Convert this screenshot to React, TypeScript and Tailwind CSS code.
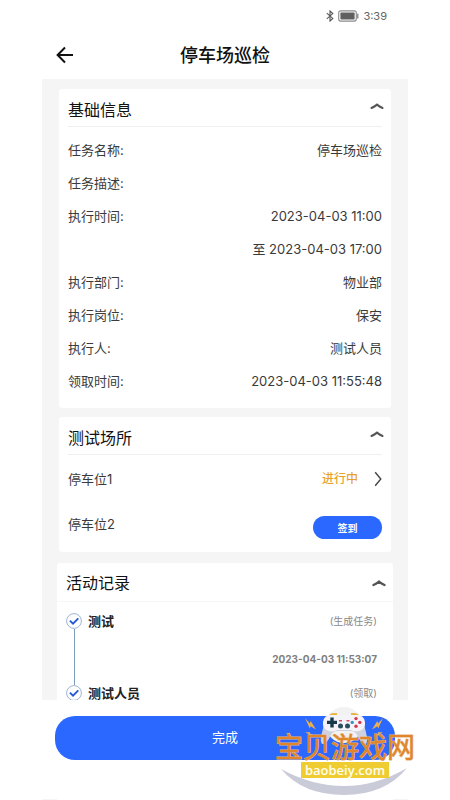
import { useState, type ReactNode } from "react";
import { clsx } from "clsx";

const INFO_ROWS = [
  { label: "任务名称:", value: "停车场巡检" },
  { label: "任务描述:", value: "" },
  { label: "执行时间:", value: "2023-04-03 11:00" },
  { label: "", value: "至 2023-04-03 17:00" },
  { label: "执行部门:", value: "物业部" },
  { label: "执行岗位:", value: "保安" },
  { label: "执行人:", value: "测试人员" },
  { label: "领取时间:", value: "2023-04-03 11:55:48" },
];

const RECORDS = [
  { name: "测试", action: "(生成任务)", time: "2023-04-03 11:53:07" },
  { name: "测试人员", action: "(领取)", time: "2023-04-03 11:55:48" },
];

function StatusBar() {
  return (
    <div className="flex h-8 shrink-0 items-center justify-end gap-1 pr-[21px] text-[11px] text-[#666]">
      <svg width="8" height="12" viewBox="0 0 8 12" fill="none" stroke="#555" strokeWidth="1.1" aria-hidden="true">
        <path d="M0.8 3.2 6.8 8.4 4 11V1l2.8 2.6L0.8 8.8" />
      </svg>
      <svg width="21" height="12" viewBox="0 0 21 12" aria-hidden="true">
        <rect x="0.7" y="0.9" width="17.6" height="10.2" rx="2" fill="#fff" stroke="#8a8a8a" strokeWidth="1.1" />
        <rect x="2.4" y="2.6" width="14.2" height="6.8" rx="0.6" fill="#5f5f5f" />
        <path d="M19.8 4v4" stroke="#777" strokeWidth="1.2" strokeLinecap="round" />
      </svg>
      <span>3:39</span>
    </div>
  );
}

function Section({
  title,
  flush = false,
  children,
}: {
  title: string;
  /** The record list runs its divider edge to edge. */
  flush?: boolean;
  children: ReactNode;
}) {
  const [open, setOpen] = useState(true);

  return (
    <section className={clsx("rounded-[3px] bg-white", flush ? "-mx-0.5 mt-0.5" : "px-[9px]")}>
      <h2 className={clsx("border-b", flush ? "border-[#f7f7f7]" : "border-[#efefef]")}>
        <button
          type="button"
          aria-expanded={open}
          onClick={() => setOpen(!open)}
          className={clsx(
            "flex w-full items-start justify-between text-base leading-6 text-[#111]",
            flush ? "h-[38px] px-[9px] pt-2" : "h-[37px] pt-[9px]",
          )}
        >
          {title}
          <svg
            width="14"
            height="8"
            viewBox="0 0 14 8"
            fill="none"
            stroke="#555"
            strokeWidth={flush ? 2.4 : 2}
            strokeLinecap="round"
            className={clsx("mt-1", flush ? "-mr-0.5 translate-y-1" : "-mr-0.5", !open && "rotate-180")}
            aria-hidden="true"
          >
            <path d="M1.5 6Q4.5 4.6 7 2.6 9.5 4.6 12.5 6" />
          </svg>
        </button>
      </h2>
      {open && children}
    </section>
  );
}

function CheckDot() {
  return (
    <svg width="16" height="16" viewBox="0 0 16 16" fill="none" className="shrink-0" aria-hidden="true">
      <circle cx="8" cy="8" r="7.4" stroke="#9fb4d4" strokeWidth="1" />
      <path d="M3.9 7.6 7 10.6 12.3 5.4" stroke="#2459d8" strokeWidth="1.9" />
    </svg>
  );
}

function BrandStamp() {
  return (
    <div className="pointer-events-none absolute right-[34px] bottom-0 h-24 w-[142px]">
      <svg width="142" height="96" viewBox="0 0 142 96" className="absolute inset-0" aria-hidden="true">
        <circle cx="70" cy="21" r="18" fill="#f1f2f1" />
        <path d="M7 65Q38 82 70 82T133 64Q111 91 70 91T7 65Z" fill="#c9cbd8" />
        <path d="M56 11.5q2-2.4 7-1.2M77 10.3q5-1.2 7 1.2" fill="none" stroke="#e7b33c" strokeWidth="2" />
        {/* grips sit behind the face plate */}
        <path
          d="M57 12h26q6 0 7 8l3 13q1 8-3 7-3-1-7-9-2-4-6-4H63q-4 0-6 4-4 8-7 9-4 1-3-7l3-13q1-8 7-8Z"
          fill="#cfd2de"
        />
        <path d="M57 11h26q7 0 8 7t-6 9q-5 1-8-1H63q-3 2-8 1-7-2-6-9t8-7Z" fill="#f3f3f8" />
        <path d="M58 13.4v10M53 18.4h10" stroke="#17394b" strokeWidth="3.4" />
        <circle cx="66.5" cy="22" r="2.5" fill="#2b4d60" />
        <circle cx="73.5" cy="22" r="2.5" fill="#2b4d60" />
        <path d="M65 16.8h3M72.5 16.8h3" stroke="#d84a63" strokeWidth="1.4" />
        <circle cx="82" cy="14.6" r="1.7" fill="#d8364d" />
        <circle cx="82" cy="22.2" r="1.7" fill="#d8364d" />
        <circle cx="78.2" cy="18.4" r="1.7" fill="#3b91bd" />
        <circle cx="85.8" cy="18.4" r="1.7" fill="#d8364d" />
        <g fill="#eab04f">
          <path d="m31 14 5 5.6.6-2.8L42 25.6l-5.4-3.4-.8 2.4Z" />
          <path d="m31 28.4 5-.4-.4 1.3 4.6 2.4-5.6-.6.3-1.2Z" />
          <path d="m109 14-5 5.6-.6-2.8-5.4 8.8 5.4-3.4.8 2.4Z" />
          <path d="m109 28.4-5-.4.4 1.3-4.6 2.4 5.6-.6-.3-1.2Z" />
        </g>
      </svg>
      <div className="absolute inset-x-0 top-[30px] flex flex-col items-center">
        <span className="text-[28px] leading-7 whitespace-nowrap text-[#e08528] [-webkit-text-stroke:1px_#e9b27c] [paint-order:stroke_fill]">
          宝贝游戏网
        </span>
        <span className="h-4 bg-[#efcd32] px-1 font-['Open_Sans',sans-serif] text-[13px] leading-4 font-semibold text-[#fffdf0]">
          baobeiy.com
        </span>
      </div>
    </div>
  );
}

export default function App() {
  return (
    <div className="relative flex h-screen flex-col bg-white px-[42px] font-[Inter,'Noto_Sans_CJK_SC',sans-serif] text-[13px] text-[#3a3a3a]">
      <StatusBar />
      <header className="grid h-[47px] shrink-0 grid-cols-[36px_1fr_36px] items-center">
        <button type="button" aria-label="返回" className="flex justify-end pr-1 pb-0.5">
          <svg width="18" height="18" viewBox="0 0 18 18" fill="none" stroke="#111" strokeWidth="2" aria-hidden="true">
            <path d="M17 9H2M9 1.5 1.6 9 9 16.5" />
          </svg>
        </button>
        <h1 className="text-center text-lg font-medium text-[#111]">停车场巡检</h1>
      </header>

      <main className="flex flex-1 flex-col gap-[9px] overflow-y-auto bg-[#f5f5f5] px-[17px] pt-[10px] [scrollbar-width:none]">
        <Section title="基础信息">
          <dl className="pt-[7px] pb-[10px]">
            {INFO_ROWS.map((row) => (
              <div key={row.value + row.label} className="flex h-[33px] items-center justify-between">
                <dt>{row.label}</dt>
                <dd>{row.value}</dd>
              </div>
            ))}
          </dl>
        </Section>

        <Section title="测试场所">
          <ul className="flex flex-col gap-[25px] pt-3 pb-[13px] leading-4">
            <li className="flex h-6 items-center justify-between">
              <span>停车位1</span>
              <a href="#spot-1" className="flex items-center gap-4 text-xs font-medium text-[#e8a22c]">
                进行中
                <svg width="8" height="16" viewBox="0 0 8 16" fill="none" stroke="#444" strokeWidth="1.4" aria-hidden="true">
                  <path d="M1.2 1.2 6.8 8 1.2 14.8" />
                </svg>
              </a>
            </li>
            <li className="flex items-start justify-between">
              <span>停车位2</span>
              <button type="button" className="h-[23px] w-[69px] rounded-full bg-[#2b68ff] text-[10px] font-bold text-white">
                签到
              </button>
            </li>
          </ul>
        </Section>

        <Section title="活动记录" flush>
          <ol className="px-[9px] pt-[11px]">
            {RECORDS.map((record, i) => (
              <li key={record.time} className="flex h-[72px] gap-[6px]">
                <div className="flex flex-col items-center">
                  <CheckDot />
                  {i < RECORDS.length - 1 && <div className="w-px flex-1 bg-[#7f9cbc]" />}
                </div>
                <div className="flex-1 pr-[7px]">
                  <div className="flex items-center justify-between leading-4">
                    <span className="font-bold text-[#222]">{record.name}</span>
                    <span className="text-[10px] text-[#888]">{record.action}</span>
                  </div>
                  <p className="mt-[22px] text-right text-[10px] leading-4 font-bold text-[#808080]">{record.time}</p>
                </div>
              </li>
            ))}
          </ol>
        </Section>
      </main>

      <footer className="flex h-[100px] shrink-0 flex-col justify-between pt-4">
        <button type="button" className="mx-[13px] h-11 rounded-[20px] bg-[#2b68ff] text-[13px] text-white">
          完成
        </button>
        <div className="h-px border-x-[15px] border-[#f5f5f5]" />
      </footer>
      <BrandStamp />
    </div>
  );
}
